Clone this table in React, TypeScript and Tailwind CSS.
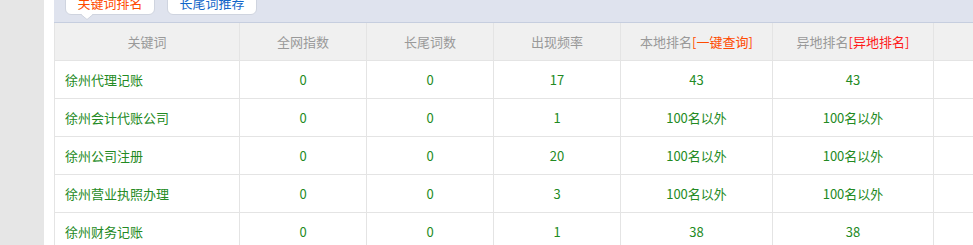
import React from "react";

const widths = ["w-[186px] border-l", "w-[127px]", "w-[127px]", "w-[127px]", "w-[152px]", "w-[161px]", "w-[120px]"];

const rows = [
  ["徐州代理记账", "0", "0", "17", "43", "43"],
  ["徐州会计代账公司", "0", "0", "1", "100名以外", "100名以外"],
  ["徐州公司注册", "0", "0", "20", "100名以外", "100名以外"],
  ["徐州营业执照办理", "0", "0", "3", "100名以外", "100名以外"],
  ["徐州财务记账", "0", "0", "1", "38", "38"],
];

export default function App() {
  return (
    <div
      className="flex h-[245px] w-[973px] overflow-hidden bg-white text-[13px]"
      style={{ fontFamily: '"Noto Sans CJK SC", "Microsoft YaHei", sans-serif' }}
    >
      <div className="w-[44px] shrink-0 bg-[#e6e6e6]" />
      <div className="ml-[10px] flex min-w-0 flex-1 flex-col">
        <div className="relative h-[23px] shrink-0 border-b border-[#c6cedf] bg-[#dfe3ee]">
          <div className="-mt-[10px] ml-[11px] flex gap-[12px]">
            <div className="relative flex h-[25px] w-[90px] items-center justify-center rounded-[6px] border border-[#cfd4df] bg-white leading-none text-[#ff4a00]">
              关键词排名
              <svg className="absolute left-[15px] top-[23px]" width="12" height="6" viewBox="0 0 12 6">
                <path d="M0 0.5 L6 5.5 L12 0.5" fill="#ffffff" stroke="#cfd4df" strokeWidth="1" />
                <rect x="1" y="0" width="10" height="1" fill="#ffffff" />
              </svg>
            </div>
            <div className="flex h-[25px] w-[90px] items-center justify-center rounded-[6px] border border-[#cfd4df] bg-white leading-none text-[#1266c9]">
              长尾词推荐
            </div>
          </div>
        </div>
        <div className="flex h-[38px] shrink-0 border-b border-[#e4e4e4] bg-[#f0f0f0] text-[#999999]">
          {["关键词", "全网指数", "长尾词数", "出现频率", "本地排名", "异地排名", ""].map((h, i) => (
            <div
              key={i}
              className={`${widths[i]} flex shrink-0 items-center justify-center border-r border-[#e4e4e4]`}
            >
              {h}
              {i === 4 && <span className="text-[#ff4a00]">[一键查询]</span>}
              {i === 5 && <span className="text-[#ff1a1a]">[异地排名]</span>}
            </div>
          ))}
        </div>
        {rows.map((r, ri) => (
          <div key={ri} className="flex h-[38px] shrink-0 border-b border-[#e4e4e4] text-[#238a23]">
            {[...r, ""].map((c, i) => (
              <div
                key={i}
                className={`${widths[i]} flex shrink-0 items-center border-r border-[#e4e4e4] ${
                  i === 0 ? "justify-start border-[#e4e4e4] pl-[10px]" : "justify-center"
                }`}
              >
                {c}
              </div>
            ))}
          </div>
        ))}
      </div>
    </div>
  );
}
